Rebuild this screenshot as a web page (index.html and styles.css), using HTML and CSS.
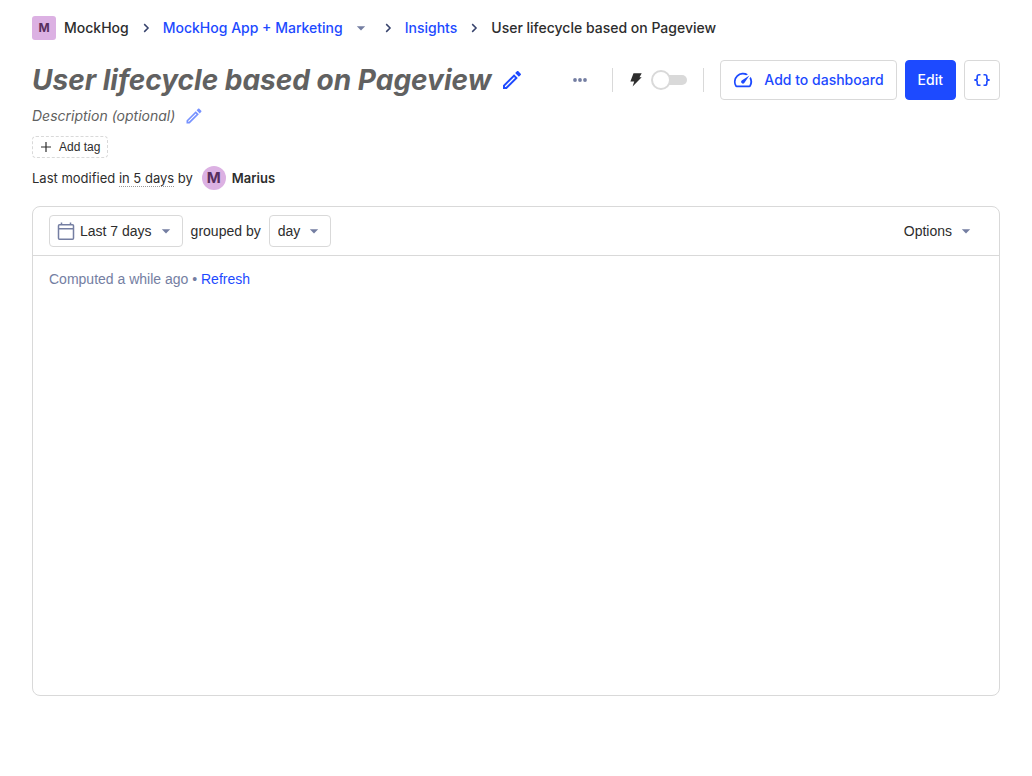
FILE: index.html
```html
<!DOCTYPE html>
<html lang="en">
<head>
<meta charset="utf-8">
<meta name="viewport" content="width=device-width, initial-scale=1">
<title>User lifecycle based on Pageview</title>
<link rel="stylesheet" href="styles.css">
</head>
<body>
<svg class="defs" aria-hidden="true">
  <symbol id="pencil" viewBox="0 0 24 24"><path fill="currentColor" d="M14.06 9.02l.92.92L5.92 19H5v-.92l9.06-9.06M17.66 3c-.25 0-.51.1-.7.29l-1.83 1.83 3.75 3.75 1.83-1.83a1 1 0 0 0 0-1.41l-2.34-2.34c-.2-.2-.45-.29-.71-.29zM14.06 6.19L3 17.25V21h3.75L17.81 9.94l-3.75-3.75z"/></symbol>
  <symbol id="caret" viewBox="0 0 24 24"><path fill="currentColor" d="M7 10l5 5 5-5z"/></symbol>
  <symbol id="chevron" viewBox="0 0 24 24"><path fill="none" stroke="currentColor" stroke-width="2.2" d="M9.3 6.2l5.8 5.8-5.8 5.8"/></symbol>
</svg>
<main class="scene">
  <nav class="breadcrumbs" aria-label="Breadcrumb">
    <span class="crumb"><span class="lettermark">M</span>MockHog</span>
    <svg class="icon-sm separator"><use href="#chevron"/></svg>
    <a class="crumb" href="#">MockHog App + Marketing<svg class="icon-md caret"><use href="#caret"/></svg></a>
    <svg class="icon-sm separator"><use href="#chevron"/></svg>
    <a class="crumb" href="#">Insights</a>
    <svg class="icon-sm separator"><use href="#chevron"/></svg>
    <span class="crumb">User lifecycle based on Pageview</span>
  </nav>

  <header class="page-header">
    <div class="title-row">
      <h1 class="title">User lifecycle based on Pageview</h1>
      <button class="icon-button" type="button" aria-label="Edit name"><svg class="icon-lg"><use href="#pencil"/></svg></button>
    </div>
    <div class="actions">
      <button class="icon-button more" type="button" aria-label="More">
        <svg class="icon-md" viewBox="0 0 20 20"><g fill="currentColor"><circle cx="5" cy="10" r="1.9"/><circle cx="10" cy="10" r="1.9"/><circle cx="15" cy="10" r="1.9"/></g></svg>
      </button>
      <span class="divider"></span>
      <label class="switch-field">
        <svg class="bolt" viewBox="0 0 14 16" role="img" aria-label="Turbo mode"><path fill="currentColor" d="M4.500 1.300h8.200l-2.200 4h2.200L3.600 14.600l1.600-5.200H1.400z"/></svg>
        <input class="switch" type="checkbox" role="switch">
      </label>
      <span class="divider"></span>
      <div class="buttons">
        <button class="button" type="button">
          <svg class="icon-md" viewBox="1 1 22 22"><path fill="currentColor" d="M20.380 8.570l-1.230 1.850a8 8 0 0 1-.22 7.580H5.070A8 8 0 0 1 15.580 6.850l1.850-1.230A10 10 0 0 0 3.350 19a2 2 0 0 0 1.720 1h13.850a2 2 0 0 0 1.740-1 10 10 0 0 0-.27-10.440zm-9.790 6.840a2 2 0 0 0 2.830 0l5.660-8.490-8.490 5.660a2 2 0 0 0 0 2.830z"/></svg>
          Add to dashboard
        </button>
        <button class="button primary" type="button">Edit</button>
        <button class="button code" type="button" aria-label="View source">
          <svg class="icon-md" viewBox="0 0 20 20"><path fill="none" stroke="currentColor" stroke-width="1.600" d="M8.500 4.700H7Q5.200 4.700 5.200 6.500V8.200Q5.200 10 2.200 10Q5.200 10 5.200 11.800V13.500Q5.200 15.300 7 15.300H8.500M11.500 4.700H13Q14.800 4.700 14.800 6.500V8.200Q14.800 10 17.800 10Q14.800 10 14.800 11.800V13.500Q14.800 15.300 13 15.300H11.500"/></svg>
        </button>
      </div>
    </div>
  </header>

  <div class="description">
    <span>Description (optional)</span>
    <button class="icon-button faded" type="button" aria-label="Edit description"><svg class="icon-md"><use href="#pencil"/></svg></button>
  </div>

  <button class="add-tag" type="button">
    <svg class="plus" viewBox="0 0 12 12"><path fill="none" stroke="currentColor" stroke-width="1.200" d="M6 1v10M1 6h10"/></svg>
    Add tag
  </button>

  <div class="modified">
    <span>Last modified <span class="time">in 5 days</span> by</span>
    <span class="person"><span class="avatar">M</span>Marius</span>
  </div>

  <section class="card">
    <div class="toolbar">
      <button class="picker" type="button">
        <svg class="icon-md" viewBox="0 0 20 20"><path fill="none" stroke="currentColor" stroke-width="1.500" d="M3.500 3.700h13q1 0 1 1v12.600q0 1-1 1h-13q-1 0-1-1V4.700q0-1 1-1zM2.500 7.800h15M5.500 1.500v2.500M14.500 1.500v2.500"/></svg>
        Last 7 days
        <svg class="icon-md"><use href="#caret"/></svg>
      </button>
      <label for="interval">grouped by</label>
      <span class="select-field">
        <select class="select" id="interval"><option>day</option></select>
        <svg class="icon-md select-caret"><use href="#caret"/></svg>
      </span>
      <button class="picker options" type="button">Options<svg class="icon-md"><use href="#caret"/></svg></button>
    </div>
    <div class="result">Computed a while ago • <a href="#">Refresh</a></div>
  </section>
</main>
</body>
</html>
```
FILE: styles.css
```css
:root {
  --ink: #2d2d2d;
  --blue: #1d4aff;
  --muted: #747ea2;
  --border: #d9d9d9;
  --lilac: #dcb1e3;
  --plum: #572e5e;
  --ui: Inter, "Liberation Sans", sans-serif;
  --body: "Liberation Sans", Arial, sans-serif;
}

*, *::before, *::after { box-sizing: border-box; }

body {
  margin: 0;
  background: #fff;
  color: var(--ink);
  font: 14px/20px var(--body);
}

a { color: var(--blue); text-decoration: none; }
button, select { font: inherit; color: inherit; cursor: pointer; }
svg { flex: none; display: block; }

.defs { position: absolute; width: 0; height: 0; }
.icon-sm { width: 16px; height: 16px; }
.icon-md { width: 20px; height: 20px; }
.icon-lg { width: 24px; height: 24px; }

.scene { padding: 16px 32px 80px; }

.breadcrumbs {
  display: flex;
  align-items: center;
  gap: 9px;
  font: 500 14px/24px var(--ui);
}
.crumb { display: flex; align-items: center; gap: 8px; white-space: nowrap; }
.separator { color: #35416b; }
.caret { color: var(--muted); }

.lettermark, .avatar {
  display: grid;
  place-items: center;
  width: 24px;
  height: 24px;
  background: var(--lilac);
  color: var(--plum);
  font-weight: 700;
}
.lettermark { border-radius: 3px; font-size: 12px; }
.avatar { border-radius: 50%; font-size: 15px; }

.page-header {
  display: flex;
  align-items: center;
  justify-content: space-between;
  gap: 16px;
  margin-top: 20px;
}
.title-row { display: flex; align-items: center; gap: 9px; }
.title {
  margin: 0;
  color: #616161;
  font: italic 700 28px/40px var(--ui);
  white-space: nowrap;
}
.icon-button {
  display: grid;
  place-items: center;
  padding: 0;
  border: 0;
  background: none;
  color: var(--blue);
}
.actions { display: flex; align-items: center; gap: 16px; }
.more { margin-right: 6px; color: var(--muted); }
.divider { width: 1px; height: 24px; background: var(--border); }

.switch-field { display: flex; align-items: center; gap: 8px; }
.bolt { width: 14px; height: 16px; }
.switch {
  display: grid;
  align-items: center;
  width: 36px;
  height: 20px;
  margin: 0;
  appearance: none;
  cursor: pointer;
}
.switch::before, .switch::after { content: ""; grid-area: 1 / 1; }
.switch::before {
  justify-self: end;
  width: 30px;
  height: 10px;
  border-radius: 5px;
  background: var(--border);
}
.switch::after {
  width: 20px;
  height: 20px;
  border: 2px solid var(--border);
  border-radius: 50%;
  background: #fff;
}

.buttons { display: flex; gap: 8px; }
.button {
  display: flex;
  align-items: center;
  gap: 11px;
  height: 40px;
  padding: 0 12px;
  border: 1px solid var(--border);
  border-radius: 4px;
  background: #fff;
  color: var(--blue);
  font: 500 14px/24px var(--ui);
  white-space: nowrap;
}
.primary { border-color: var(--blue); background: var(--blue); color: #fff; }
.code { padding: 0 7px; }

.description {
  display: flex;
  align-items: center;
  gap: 9px;
  margin-top: 4px;
  color: #616161;
  font: italic 14px/24px var(--ui);
}
.faded { opacity: 0.6; }

.add-tag {
  display: flex;
  align-items: center;
  gap: 7px;
  height: 22px;
  margin-top: 8px;
  padding: 0 7px;
  border: 1px dashed var(--border);
  border-radius: 4px;
  background: #fff;
  font: 12px/20px var(--body);
}
.plus { width: 12px; height: 12px; }

.modified {
  display: flex;
  align-items: center;
  gap: 9px;
  margin-top: 8px;
  font: 13px/24px var(--ui);
}
.time { border-bottom: 1px dotted #999; }
.person { display: flex; align-items: center; gap: 6px; font-weight: 600; }

.card {
  min-height: 490px;
  margin-top: 16px;
  border: 1px solid var(--border);
  border-radius: 8px;
}
.toolbar {
  display: flex;
  align-items: center;
  gap: 8px;
  padding: 8px 16px;
  border-bottom: 1px solid var(--border);
}
.picker {
  display: flex;
  align-items: center;
  gap: 4px;
  height: 32px;
  padding: 0 6px;
  border: 1px solid var(--border);
  border-radius: 4px;
  background: #fff;
}
.picker svg, .select-caret { color: var(--muted); }
.options { margin-left: auto; border-color: transparent; }
.select-field { display: grid; align-items: center; }
.select {
  grid-area: 1 / 1;
  height: 32px;
  padding: 0 29px 0 8px;
  border: 1px solid var(--border);
  border-radius: 4px;
  background: #fff;
  appearance: none;
}
.select-caret { grid-area: 1 / 1; justify-self: end; margin-right: 7px; pointer-events: none; }

.result { padding: 13px 16px; color: var(--muted); }
```
